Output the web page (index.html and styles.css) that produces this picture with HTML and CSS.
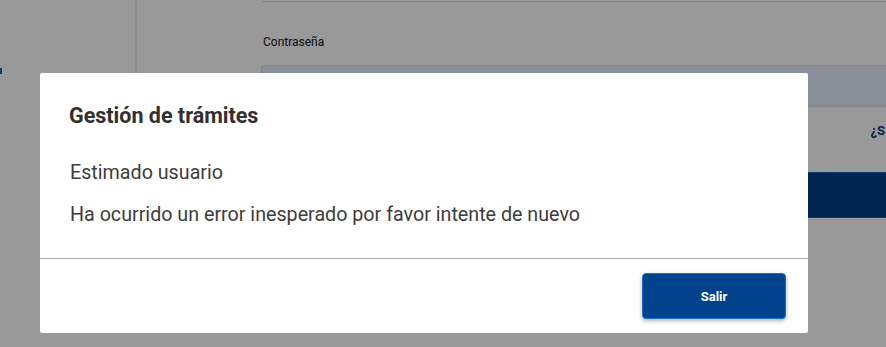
FILE: index.html
```html
<!DOCTYPE html>
<html lang="es">
<head>
<meta charset="utf-8">
<title>Gestión de trámites</title>
<link rel="stylesheet" href="styles.css">
</head>
<body>
<div class="page">
  <aside class="sidebar">
    <span class="side-mark"></span>
  </aside>
  <main class="content">
    <div class="field-top"></div>
    <label class="label">Contraseña</label>
    <div class="input"></div>
    <div class="forgot-row"><span class="forgot">¿S</span></div>
    <div class="login-btn"></div>
  </main>
</div>
<div class="overlay">
  <div class="modal">
    <div class="modal-body">
      <h2 class="modal-title">Gestión de trámites</h2>
      <p class="msg">Estimado usuario</p>
      <p class="msg">Ha ocurrido un error inesperado por favor intente de nuevo</p>
    </div>
    <div class="modal-footer">
      <button class="btn-exit">Salir</button>
    </div>
  </div>
</div>
</body>
</html>
```
FILE: styles.css
```css
* { box-sizing: border-box; }
html, body { margin: 0; height: 100%; }
body {
  font-family: Roboto, "Liberation Sans", sans-serif;
  background: #fff;
  overflow: hidden;
  position: relative;
}
.page {
  display: flex;
  align-items: flex-start;
  height: 347px;
}
.sidebar {
  width: 137px;
  height: 320px;
  flex: none;
  border-right: 2px solid #e5e9ef;
  position: relative;
}
.side-mark {
  position: absolute;
  left: 0;
  top: 68px;
  width: 2px;
  height: 6px;
  background: #2a5db0;
}
.content {
  flex: 1;
  padding-left: 124px;
  display: flex;
  flex-direction: column;
}
.field-top {
  height: 2px;
  border-bottom: 1px solid #d8d8d8;
  margin-left: 1px;
}
.label {
  margin-top: 33px;
  font-size: 12px;
  line-height: 14px;
  color: #111;
  padding-left: 2px;
}
.input {
  margin-top: 16px;
  height: 42px;
  background: #e8f0fe;
  border: 1px solid #e0e0e0;
  border-right: none;
  border-radius: 4px 0 0 4px;
}
.forgot-row {
  margin-top: 16px;
  display: flex;
  justify-content: flex-end;
  padding-right: 1px;
}
.forgot {
  font-size: 13px;
  font-weight: 700;
  color: #003a80;
  line-height: 16px;
}
.login-btn {
  margin-top: 33px;
  height: 46px;
  background: #003d84;
  border-top: 1px solid #1a6bc4;
  border-bottom: 1px solid #1a6bc4;
}
.overlay {
  position: absolute;
  inset: 0;
  background: rgba(0, 0, 0, 0.4);
  padding: 73px 78px 0 40px;
}
.modal {
  width: 768px;
  height: 260px;
  background: #fff;
  border-radius: 2px;
  display: flex;
  flex-direction: column;
}
.modal-body {
  padding: 30px 29px 0 29px;
  height: 186px;
  border-bottom: 1px solid #aaa;
}
.modal-title {
  margin: 0;
  font-size: 21.5px;
  line-height: 26px;
  font-weight: 700;
  color: #303030;
}
.msg {
  margin: 0;
  padding-left: 1px;
  font-size: 19.7px;
  line-height: 22px;
  color: #3d3d3d;
}
.modal-title + .msg { margin-top: 33px; }
.msg + .msg { margin-top: 20px; }
.modal-footer {
  flex: 1;
  display: flex;
  justify-content: flex-end;
  align-items: flex-start;
  padding: 14px 22px 0 0;
}
.btn-exit {
  width: 144px;
  height: 46px;
  background: #00428b;
  border: 1px solid #1b6fd1;
  border-radius: 4px;
  color: #fff;
  font-family: Roboto, "Liberation Sans", sans-serif;
  font-size: 13px;
  font-weight: 700;
  box-shadow: 0 2px 4px rgba(0, 0, 0, 0.3);
}
```
